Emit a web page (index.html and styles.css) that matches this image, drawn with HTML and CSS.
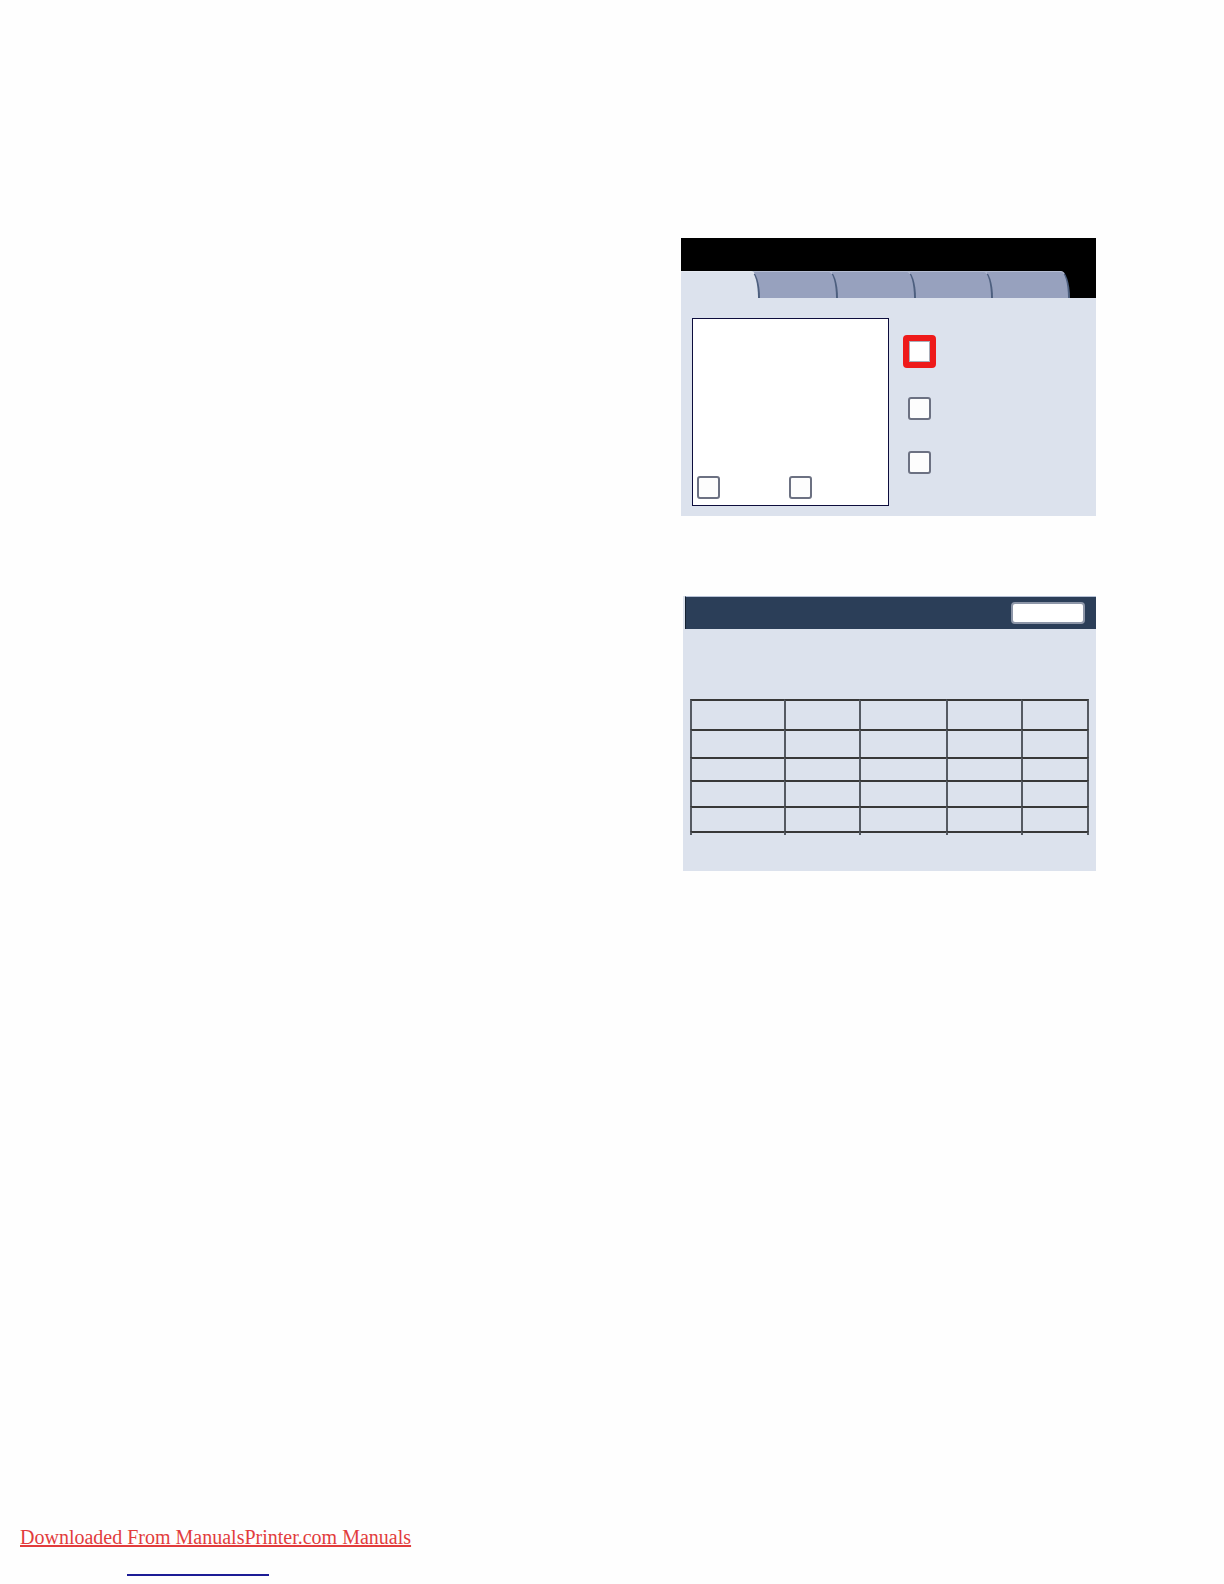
FILE: index.html
```html
<!DOCTYPE html>
<html lang="en">
<head>
<meta charset="utf-8">
<title>Screen</title>
<link rel="stylesheet" href="styles.css">
</head>
<body>
<div class="page">
  <div class="screen">
    <div class="titlebar"></div>
    <div class="tabs">
      <div class="tab active t1"></div>
      <div class="tab t2"></div>
      <div class="tab t3"></div>
      <div class="tab t4"></div>
      <div class="tab t5"></div>
    </div>
    <div class="screen-body">
      <div class="preview">
        <div class="chk"></div>
        <div class="chk"></div>
      </div>
      <div class="options">
        <div class="opt-sel"></div>
        <div class="chk opt2"></div>
        <div class="chk opt3"></div>
      </div>
    </div>
  </div>

  <div class="dialog">
    <div class="dialog-head">
      <div class="btn"></div>
    </div>
    <div class="grid">
      <div class="c"></div><div class="c"></div><div class="c"></div><div class="c"></div><div class="c last"></div>
      <div class="c"></div><div class="c"></div><div class="c"></div><div class="c"></div><div class="c last"></div>
      <div class="c"></div><div class="c"></div><div class="c"></div><div class="c"></div><div class="c last"></div>
      <div class="c"></div><div class="c"></div><div class="c"></div><div class="c"></div><div class="c last"></div>
      <div class="c"></div><div class="c"></div><div class="c"></div><div class="c"></div><div class="c last"></div>
      <div class="c"></div><div class="c"></div><div class="c"></div><div class="c"></div><div class="c last"></div>
    </div>
  </div>

  <div class="footer">
    <a class="link" href="#">Downloaded From ManualsPrinter.com Manuals</a>
  </div>
  <div class="rule"></div>
</div>
</body>
</html>
```
FILE: styles.css
```css
body {
  margin: 0;
  background: #fefefe;
  font-family: "Liberation Serif", "Times New Roman", serif;
}

.page {
  display: flex;
  flex-direction: column;
  padding-top: 238px;
}

/* ---------- top screen ---------- */
.screen {
  margin-left: 681px;
  width: 415px;
  height: 278px;
  background: #dce2ed;
  display: flex;
  flex-direction: column;
}

.titlebar {
  height: 33px;
  background: #000;
}

.tabs {
  height: 27px;
  background: #000;
  display: flex;
}

.tab {
  position: relative;
  height: 27px;
  box-sizing: border-box;
  background: #97a1be;
  border-top: 1px solid #b4bcd2;
  border-right: 2px solid #4d5f7f;
  border-top-right-radius: 9px 27px;
}

.tab + .tab {
  margin-left: -10px;
}

.tab.active {
  background: #dce2ed;
  border-top-color: #e6eaf2;
}

.t1 { width: 79px; z-index: 5; }
.t2 { width: 88px; z-index: 4; }
.t3 { width: 88px; z-index: 3; }
.t4 { width: 87px; z-index: 2; }
.t5 { width: 87px; z-index: 1; }

.screen-body {
  flex: 1;
  display: flex;
  padding: 20px 0 0 11px;
}

.preview {
  width: 197px;
  height: 188px;
  box-sizing: border-box;
  border: 1px solid #0d0d3d;
  background: #fff;
  display: flex;
  align-items: flex-end;
  gap: 69px;
  padding: 0 0 6px 4px;
}

.chk {
  width: 23px;
  height: 23px;
  box-sizing: border-box;
  border: 2px solid #6c7182;
  border-radius: 3px;
  background: #fdfdfd;
}

.options {
  width: 33px;
  margin-left: 14px;
  padding-top: 17px;
  display: flex;
  flex-direction: column;
  align-items: center;
}

.opt-sel {
  width: 33px;
  height: 33px;
  box-sizing: border-box;
  border: 6px solid #ee1a1a;
  border-radius: 4px;
  background: #fff;
  box-shadow: inset 0 0 0 1px #a9adb8;
}

.opt2 { margin-top: 29px; }
.opt3 { margin-top: 31px; }

/* ---------- bottom dialog ---------- */
.dialog {
  margin-left: 683px;
  margin-top: 80px;
  width: 413px;
  height: 275px;
  background: #dce2ed;
  display: flex;
  flex-direction: column;
}

.dialog-head {
  height: 33px;
  box-sizing: border-box;
  margin-left: 2px;
  background: #2b3e58;
  border-top: 1px solid #b7c2d6;
  border-left: 1px solid #14202f;
  display: flex;
  justify-content: flex-end;
  align-items: center;
  padding-right: 11px;
}

.btn {
  width: 74px;
  height: 22px;
  box-sizing: border-box;
  border: 2px solid #8d96a8;
  border-radius: 4px;
  background: #fff;
}

.grid {
  margin: 70px 7px 0 7px;
  display: grid;
  grid-template-columns: 94px 75px 87px 75px 68px;
  grid-template-rows: 30px 28px 23px 26px 25px 4px;
}

.c {
  box-sizing: border-box;
  border-top: 2px solid #383838;
  border-left: 2px solid #555a62;
}

.c.last {
  border-right: 2px solid #555a62;
}

/* ---------- footer ---------- */
.footer {
  margin-top: 655px;
  padding-left: 20px;
  font-size: 20px;
  line-height: 23px;
}

.link {
  color: #e23c3c;
  text-decoration: underline;
}

.rule {
  margin-left: 127px;
  margin-top: 25px;
  width: 142px;
  height: 2px;
  background: #1c1c96;
}
```
